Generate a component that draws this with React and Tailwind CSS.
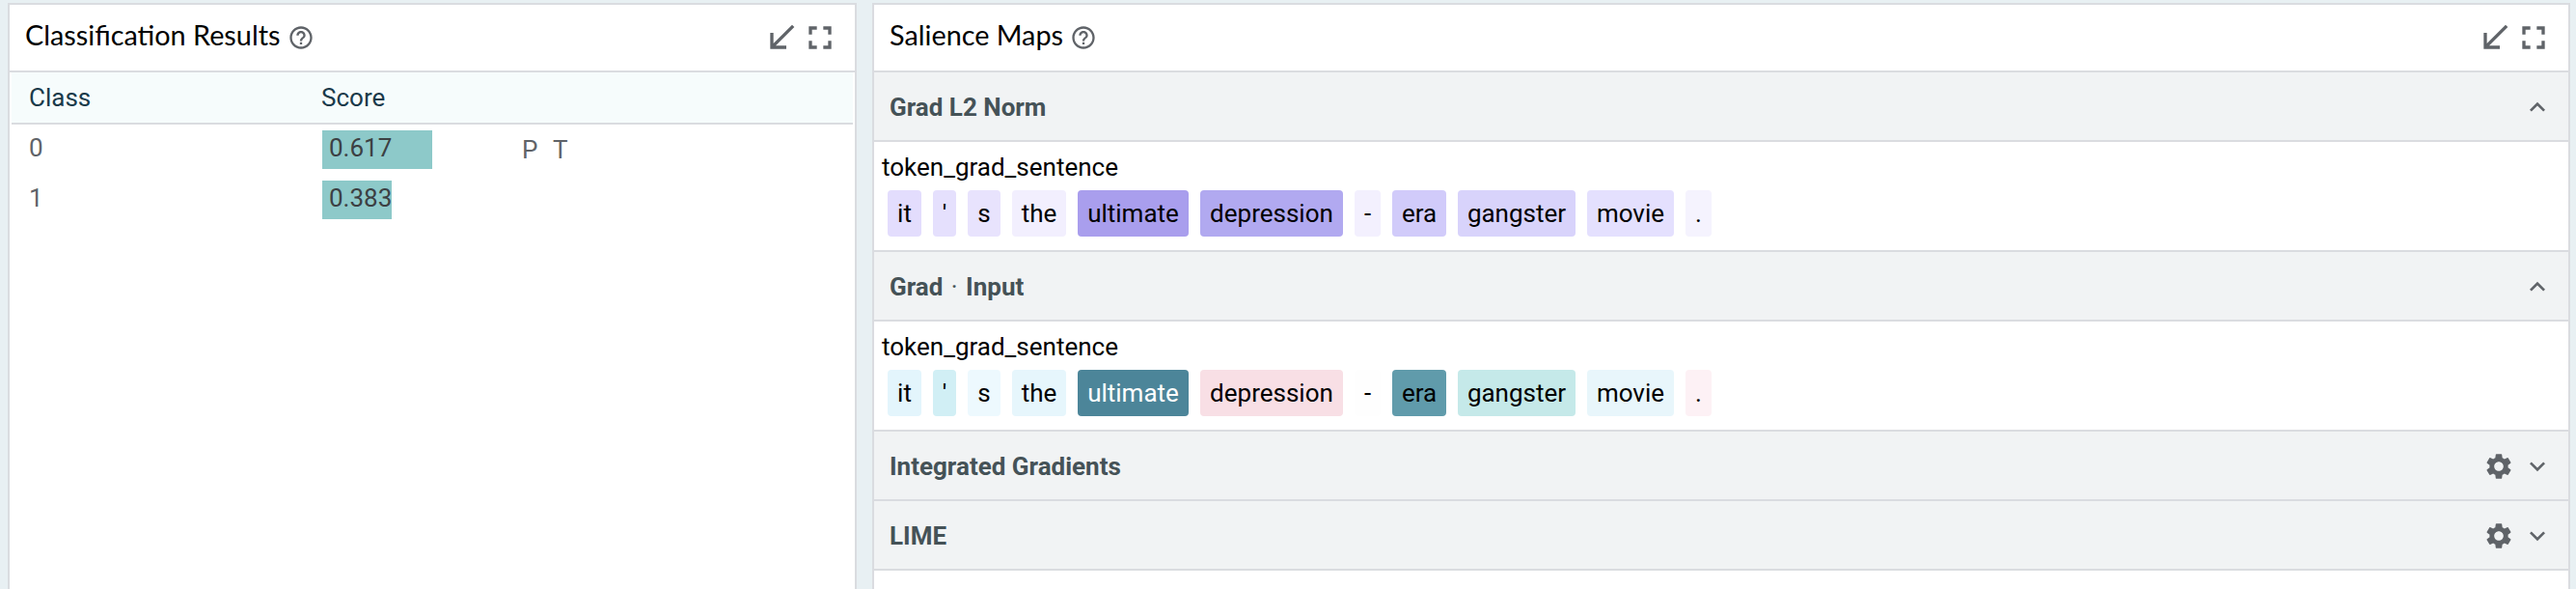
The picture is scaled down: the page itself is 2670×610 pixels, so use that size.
import React from "react";
import {
  MdHelpOutline,
  MdCallReceived,
  MdFullscreen,
  MdExpandLess,
  MdExpandMore,
  MdSettings,
} from "react-icons/md";

const WORDS = [
  ["it", "w-[35px]"],
  ["'", "w-[24px]"],
  ["s", "w-[34px]"],
  ["the", "w-[56px]"],
  ["ultimate", "w-[115px]"],
  ["depression", "w-[148px]"],
  ["-", "w-[27px]"],
  ["era", "w-[56px]"],
  ["gangster", "w-[122px]"],
  ["movie", "w-[90px]"],
  [".", "w-[27px]"],
];

const L2_COLORS = [
  "bg-[#e3ddfd]",
  "bg-[#e5e0fd]",
  "bg-[#e8e3fd]",
  "bg-[#f2effe]",
  "bg-[#a99eed]",
  "bg-[#b1a9f0]",
  "bg-[#f3f0fe]",
  "bg-[#d1cbfa]",
  "bg-[#d8d3fb]",
  "bg-[#e4e0fe]",
  "bg-[#f5f3fe]",
];

const INPUT_COLORS = [
  "bg-[#e3f5fc]",
  "bg-[#d1eff5]",
  "bg-[#edf9fe]",
  "bg-[#e6f6fc]",
  "bg-[#4c8599] text-white",
  "bg-[#f8dfe5]",
  "bg-[#fefefe]",
  "bg-[#609bab]",
  "bg-[#c5e9e9]",
  "bg-[#e8f6fb]",
  "bg-[#fdf1f5]",
];

function Panel({ title, titleClass, className, children }) {
  return (
    <section className={`flex flex-col border-2 border-b-0 border-[#dadce0] bg-white ${className}`}>
      <header className="flex h-[70px] shrink-0 items-center border-b-2 border-[#dadce0] pr-4 pl-4">
        <h2 className={`pb-1.5 font-[Lato] text-[28.8px] leading-8 whitespace-nowrap text-black ${titleClass}`}>{title}</h2>
        <MdHelpOutline className="size-7 shrink-0 text-[#5f6368]" />
        <div className="ml-auto flex text-[#5f6368]">
          <MdCallReceived className="size-10" />
          <MdFullscreen className="size-10" />
        </div>
      </header>
      {children}
    </section>
  );
}

function SectionHeader({ title, open, settings }) {
  return (
    <div className="flex h-[72px] shrink-0 items-center border-b-2 border-[#dadce0] bg-[#f1f3f4] pr-4 pl-4">
      <h3 className="pt-0.5 text-[26px] leading-8 font-bold text-[#455257]">{title}</h3>
      <div className="ml-auto flex gap-2 pt-0.5 text-[#5f6368]">
        {settings && <MdSettings className="size-8" />}
        {open ? <MdExpandLess className="size-8" /> : <MdExpandMore className="size-8" />}
      </div>
    </div>
  );
}

function Tokens({ colors }) {
  return (
    <div className="h-[114px] shrink-0 border-b-2 border-[#dadce0] pt-2.5">
      <div className="h-10 pl-2 text-[26px] leading-8">token_grad_sentence</div>
      <div className="flex gap-3 pl-3.5">
        {WORDS.map(([word, width], i) => (
          <span
            key={i}
            className={`flex h-12 justify-center rounded-[4px] text-[26px] leading-[48px] ${width} ${colors[i]}`}
          >
            {word}
          </span>
        ))}
      </div>
    </div>
  );
}

function ScoreRow({ label, score, barClass, tags }) {
  return (
    <div className="flex h-[52px] items-center text-[26px] text-[#5f6368]">
      <div className="w-[304px] pb-1 leading-10">{label}</div>
      <div className="w-[207px]">
        <div className={`h-10 bg-[#8dc9c9] pl-[7px] leading-9 text-[#3c4043] ${barClass}`}>{score}</div>
      </div>
      {tags && (
        <div className="flex leading-10">
          <span className="w-8">P</span>
          <span>T</span>
        </div>
      )}
    </div>
  );
}

export default function App() {
  return (
    <main className="flex h-[610px] w-[2670px] gap-4 overflow-hidden bg-[#e8f0f3] pt-[3px] pl-2 font-[Roboto,sans-serif] text-black">
      <Panel title="Classification Results" titleClass="w-[272px]" className="w-[880px]">
        <div className="px-0.5">
          <div className="flex h-[54px] items-center border-b-2 border-[#dadce0] bg-[#f6fcfc] pl-[18px] text-[26px] text-[#1a3a4a]">
            <div className="w-[303px]">Class</div>
            <div>Score</div>
          </div>
          <div className="pl-[18px]">
            <ScoreRow label="0" score="0.617" barClass="w-[114px]" tags />
            <ScoreRow label="1" score="0.383" barClass="w-[72px]" />
          </div>
        </div>
      </Panel>
      <Panel title="Salience Maps" titleClass="w-[187px]" className="w-[1760px]">
        <SectionHeader title="Grad L2 Norm" open />
        <Tokens colors={L2_COLORS} />
        <SectionHeader title={<>Grad <span className="mx-[2px] font-normal">·</span> Input</>} open />
        <Tokens colors={INPUT_COLORS} />
        <SectionHeader title="Integrated Gradients" settings />
        <SectionHeader title="LIME" settings />
      </Panel>
    </main>
  );
}
